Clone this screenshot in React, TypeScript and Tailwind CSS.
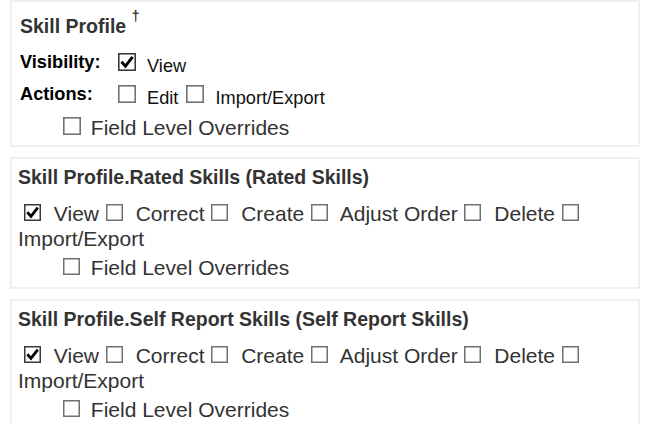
import React from "react";

function Cb({ size = 17, checked = false, className = "" }: { size?: number; checked?: boolean; className?: string }) {
  return (
    <span className={`inline-block align-baseline ${className}`}>
      <svg width={size} height={size} viewBox="0 0 17 17" className="block">
        <rect x="0.75" y="0.75" width="15.5" height="15.5" fill="white" stroke={checked ? "#3a3a3a" : "#707070"} strokeWidth="1.5" />
        {checked && <path d="M3.3 8.3 L7 12.4 L13.8 3.6" fill="none" stroke="#000" strokeWidth="2.8" />}
      </svg>
    </span>
  );
}

function SubPanel({ title }: { title: string }) {
  return (
    <div className="border-2 border-[#efefef] bg-white pt-[6px] pb-[7px] pl-[6px] pr-[6px]">
      <div className="text-[19.5px] leading-[24px] font-bold text-[#333]">{title}</div>
      <div className="mt-[12px] text-[21px] leading-[25px] text-[#333]">
        <Cb checked className="ml-[6px] mr-[7px]" /> View{" "}
        <Cb className="ml-[1px] mr-[7px]" /> Correct{" "}
        <Cb className="ml-[1px] mr-[7px]" /> Create{" "}
        <Cb className="ml-[1px] mr-[7px]" /> Adjust Order{" "}
        <Cb className="ml-[1px] mr-[7px]" /> Delete{" "}
        <Cb className="ml-[1px] mr-[7px]" /> Import/Export
      </div>
      <div className="mt-[4px] pl-[44px] text-[21px] leading-[25px] text-[#333]">
        <Cb className="ml-[1px] mr-[5px]" /> Field Level Overrides
      </div>
    </div>
  );
}

export default function App() {
  return (
    <div className="bg-white min-h-[423px] pl-[10px] pr-[11px] font-['Liberation_Sans',Arial,sans-serif] flex flex-col gap-[10px]">
      <div className="border-2 border-[#efefef] bg-white pt-[12px] pb-[5px] pl-[8px]">
        <div className="text-[19.5px] leading-[24px] font-bold text-[#333]">
          Skill Profile <sup className="text-[14px] top-[-12px] font-bold">†</sup>
        </div>
        <div className="mt-[13px] flex items-start">
          <div className="w-[95px] shrink-0 text-[18.2px] leading-[22px] font-bold text-black">Visibility:</div>
          <div className="pt-[2px] text-[18.2px] leading-[26px] text-[#111]">
            <Cb size={18} checked className="ml-[3px] mr-[6px] mb-[1.3px]" /> View
          </div>
        </div>
        <div className="mt-[4px] flex items-start">
          <div className="w-[95px] shrink-0 text-[18.2px] leading-[22px] font-bold text-black">Actions:</div>
          <div className="pt-[2px] text-[18.2px] leading-[26px] text-[#111]">
            <Cb size={18} className="ml-[3px] mr-[6px] mb-[1.3px]" /> Edit{" "}
            <Cb size={18} className="ml-[3px] mr-[6px] mb-[1.3px]" /> Import/Export
          </div>
        </div>
        <div className="mt-[3px] pl-[41px] text-[21px] leading-[25px] text-[#333]">
          <Cb size={18} className="ml-[2px] mr-[4px]" /> Field Level Overrides
        </div>
      </div>
      <SubPanel title="Skill Profile.Rated Skills (Rated Skills)" />
      <SubPanel title="Skill Profile.Self Report Skills (Self Report Skills)" />
    </div>
  );
}
